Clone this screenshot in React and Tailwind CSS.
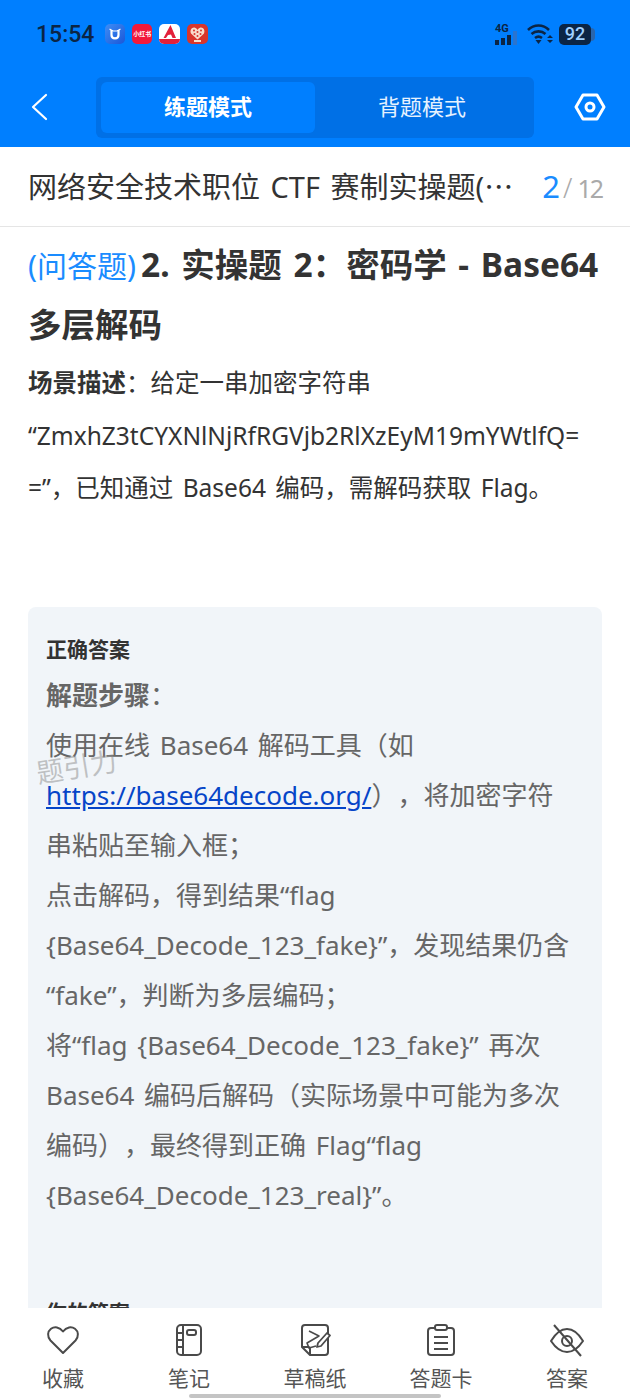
import React from "react";

const tabs = [
  { label: "收藏", icon: "heart" },
  { label: "笔记", icon: "note" },
  { label: "草稿纸", icon: "draft" },
  { label: "答题卡", icon: "card" },
  { label: "答案", icon: "eye" },
];

const TabIcon = ({ name }) => {
  if (name === "heart")
    return (
      <svg width="36" height="36" viewBox="0 0 36 36" fill="none" stroke="#4a4a4a" strokeWidth="2" strokeLinejoin="round">
        <path d="M18 31 L5.5 18.5 C2 14.5 2.5 9.5 6 6.8 C9.5 4.2 14.5 4.8 18 9.5 C21.5 4.8 26.5 4.2 30 6.8 C33.500 9.500 34 14.500 30.500 18.500 Z" />
      </svg>
    );
  if (name === "note")
    return (
      <svg width="36" height="36" viewBox="0 0 36 36" fill="none" stroke="#4a4a4a" strokeWidth="2">
        <rect x="6" y="3" width="24" height="30" rx="4" />
        <path d="M12 3 V33 M6 11 H12 M6 18 H12 M6 25 H12" />
        <rect x="16" y="8" width="9" height="5" rx="2" />
      </svg>
    );
  if (name === "draft")
    return (
      <svg width="36" height="36" viewBox="0 0 36 36" fill="none" stroke="#4a4a4a" strokeWidth="2" strokeLinejoin="round">
        <path d="M8 3 H28 Q31 3 31 6 V30 Q31 33 28 33 H13 L5 25 V6 Q5 3 8 3 Z" />
        <path d="M5 25 H11 Q13 25 13 27 V33" />
        <path d="M12 9 L22 14 L10 21 L12 26 L19 24" strokeWidth="1.600" />
        <path d="M20 25 L21 21 L30 11 L33 13.500 L24 24 Z" fill="#fff" strokeWidth="1.800" />
      </svg>
    );
  if (name === "card")
    return (
      <svg width="36" height="36" viewBox="0 0 36 36" fill="none" stroke="#4a4a4a" strokeWidth="2">
        <path d="M12 6 H8 Q5 6 5 9 V30 Q5 33 8 33 H28 Q31 33 31 30 V9 Q31 6 28 6 H24" />
        <rect x="12" y="3" width="12" height="5" rx="2" />
        <path d="M11 15 H25 M11 21 H25 M11 27 H25" />
      </svg>
    );
  return (
    <svg width="36" height="36" viewBox="0 0 36 36" fill="none" stroke="#4a4a4a" strokeWidth="2" strokeLinejoin="round">
      <path d="M2 19 C8 9 13 7 18 7 C23 7 28 9 34 19 C28 28 23 30 18 30 C13 30 8 28 2 19 Z" />
      <circle cx="18" cy="19" r="5" />
      <path d="M5 3 L32 34" />
    </svg>
  );
};

const StatusBar = () => (
  <div className="h-[68px] pl-[36px] pr-[35px] flex items-center justify-between">
    <div className="flex items-center gap-[7px]">
      <span className="text-[23px] font-medium text-[#0b2545] font-['Roboto',sans-serif] leading-none mr-[4px]">15:54</span>
      <div className="w-5 h-5 rounded-[5px] bg-gradient-to-br from-[#3f8df5] to-[#1c56d8] flex items-center justify-center">
        <svg width="14" height="14" viewBox="0 0 14 14" fill="none" stroke="#fff" strokeWidth="2.200">
          <path d="M3.500 3 V8 C3.500 12.500 10.500 12.500 10.500 8 V3" />
          <path d="M1.500 2 L5 4 H9 L12.500 2" strokeWidth="1.200" />
        </svg>
      </div>
      <div className="w-5 h-5 rounded-[5px] bg-[#f2193b] flex items-center justify-center">
        <span className="text-[6px] text-white font-bold leading-none whitespace-nowrap">小红书</span>
      </div>
      <div className="w-[21px] h-5 rounded-[5px] bg-white flex flex-col items-center overflow-hidden">
        <svg width="16" height="15" viewBox="0 0 16 15" fill="#e3203a">
          <path d="M8.500 1 L14 14 H10.500 L9 10.500 L6 11 L4 14 H1.500 Z" />
        </svg>
        <div className="w-full h-[5px] bg-[#e3203a]" />
      </div>
      <div className="w-[21px] h-5 rounded-[5px] bg-[#d9352b] flex items-center justify-center">
        <svg width="17" height="17" viewBox="0 0 17 17">
          <path d="M8.500 13.500 L2 7.500 C0.500 4 3 1 5.500 1.500 C7 2 8 3 8.500 4 C9 3 10 2 11.500 1.500 C14 1 16.500 4 15 7.500 Z" fill="#f8dccb" />
          <g fill="#d9352b">
            <circle cx="5" cy="4.500" r="1" /><circle cx="8.500" cy="6" r="1" /><circle cx="12" cy="4.500" r="1" />
            <circle cx="5.500" cy="8" r="1" /><circle cx="11.500" cy="8" r="1" /><circle cx="8.500" cy="10" r="1" />
          </g>
          <rect x="5" y="14" width="7" height="2" fill="#f8dccb" />
        </svg>
      </div>
    </div>
    <div className="flex items-center">
      <div className="relative w-[25px] h-[21px] mr-[7px]">
        <span className="absolute left-0 top-[-1px] text-[11px] font-bold text-[#0b2545] leading-none font-['Roboto',sans-serif]">4G</span>
        <div className="absolute left-0 bottom-0 flex items-end gap-[2px]">
          <div className="w-[4px] h-[5px] bg-[#0b2545]" />
          <div className="w-[4px] h-[7px] bg-[#0b2545]" />
          <div className="w-[4px] h-[10px] bg-[#0b2545]" />
          <div className="w-[4px] h-[14px] bg-[#2a74cf]" />
        </div>
      </div>
      <svg width="26" height="22" viewBox="0 0 26 22" fill="none" stroke="#0b2545" strokeWidth="2.600" className="mr-[6px]">
        <path d="M1 7 C7 1 16 1 22 7" />
        <path d="M4.500 11 C8.500 7.500 14.500 7.500 18.500 11" />
        <path d="M8 15 C10 13.500 13 13.500 15 15" />
        <path d="M8.500 17 H14.500 L11.500 21 Z" fill="#0b2545" stroke="none" />
        <path d="M20 15 H26 L23 12 Z M20 17 H26 L23 20 Z" fill="#0b2545" stroke="none" />
      </svg>
      <div className="flex items-center">
        <div className="w-[32px] h-[21px] rounded-[5px] bg-[#0b2545] flex items-center justify-center">
          <span className="text-[18px] font-medium text-[#9fd0ff] leading-none font-['Roboto',sans-serif]">92</span>
        </div>
        <div className="w-[4px] h-[13px] rounded-r-sm bg-[#2a66ad]" />
      </div>
    </div>
  </div>
);

const Header = () => (
  <header className="bg-[#007fff] h-[147px]">
    <StatusBar />
    <div className="flex items-center h-[62px] mt-[8px]">
      <div className="w-[96px] pl-[31px]">
        <svg width="17" height="28" viewBox="0 0 17 28" fill="none" stroke="#fff" strokeWidth="2.200" strokeLinecap="round" strokeLinejoin="round">
          <path d="M15 2 L2 14 L15 26" />
        </svg>
      </div>
      <div className="w-[438px] h-[61px] rounded-[6px] bg-[#0070e6] p-[5px] flex">
        <div className="w-[214px] pb-[2px] rounded-[6px] bg-[#007fff] flex items-center justify-center text-white text-[22px] font-bold">练题模式</div>
        <div className="flex-1 pb-[2px] flex items-center justify-center text-[#e6f2ff] text-[22px]">背题模式</div>
      </div>
      <div className="flex-1 flex justify-center pl-[16px]">
        <svg width="32" height="28" viewBox="0 0 32 28" fill="none" stroke="#fff" strokeWidth="3" strokeLinejoin="round">
          <path d="M9 2 H23 L30 14 L23 26 H9 L2 14 Z" />
          <circle cx="16" cy="14" r="4" />
        </svg>
      </div>
    </div>
  </header>
);

export default function App() {
  return (
    <div className="relative w-[630px] h-[1400px] overflow-hidden flex flex-col bg-white [text-spacing-trim:space-all] font-['Noto_Sans','Noto_Sans_CJK_SC',sans-serif]">
      <Header />

      <div className="h-[80px] shrink-0 border-b border-[#e5e5e5] pl-[28px] pr-[28px] flex items-center justify-between">
        <span className="text-[29px] text-[#333] whitespace-nowrap [word-spacing:3px]">
          网络安全技术职位 CTF 赛制实操题(<span className="font-['Noto_Sans_CJK_SC',sans-serif]">…</span>
        </span>
        <span className="flex items-baseline whitespace-nowrap">
          <span className="text-[31px] text-[#1a8cff]">2</span>
          <span className="text-[27px] text-[#aaa] font-light ml-[3px]">/</span>
          <span className="text-[25px] text-[#aaa] ml-[5px] tracking-[-2px]">12</span>
        </span>
      </div>

      <main className="relative flex-1 min-h-0 overflow-hidden px-[28px] pt-[8px]">
        <h1 className="text-[33.5px] leading-[58px] font-bold text-[#333] [word-spacing:3px]">
          <span className="text-[#1a8cff] font-normal text-[30px] mr-[5px]">(问答题)</span>2. 实操题 2：密码学 - Base64 多层解码
        </h1>
        <div className="text-[24.5px] leading-[52.5px] text-[#333] break-all mt-[4px] [word-spacing:3px]">
          <p><strong>场景描述</strong>：给定一串加密字符串</p>
          <p>“ZmxhZ3tCYXNlNjRfRGVjb2RlXzEyM19mYWtlfQ==”，已知通过 Base64 编码，需解码获取 Flag。</p>
        </div>

        <section className="mt-[92px] rounded-[8px] bg-[#f1f5f9] pl-[18px] pr-[26px] pt-[22px] pb-[60px]">
          <h2 className="text-[21px] leading-[40px] font-bold text-[#333]">正确答案</h2>
          <div className="text-[26px] leading-[50px] text-[#666] mt-[1px] [word-spacing:3px]">
            <p><strong>解题步骤</strong>：</p>
            <p>
              使用在线 Base64 解码工具（如 <a className="text-[#0645c8] underline" href="#">https://base64decode.org/</a>），将加密字符串粘贴至输入框；
            </p>
            <p>点击解码，得到结果“flag {"{"}Base64_Decode_123_fake{"}"}”，发现结果仍含 “fake”，判断为多层编码；</p>
            <p>将“flag {"{"}Base64_Decode_123_fake{"}"}” 再次 Base64 编码后解码（实际场景中可能为多次编码），最终得到正确 Flag“flag {"{"}Base64_Decode_123_real{"}"}”。</p>
          </div>
          <h2 className="text-[21px] leading-[40px] font-bold text-[#333] mt-[72px]">你的答案</h2>
        </section>

        <div className="absolute left-[36px] top-[526px] -rotate-[9deg] text-[27px] text-[#8c8c8c]/50 leading-none pointer-events-none">题引力</div>
      </main>

      <nav className="h-[92px] shrink-0 bg-white grid grid-cols-5 pt-[14px]">
        {tabs.map((tab) => (
          <div key={tab.label} className="flex flex-col items-center text-[21px] leading-[30px] text-[#555]">
            <TabIcon name={tab.icon} />
            <span className="mt-[5px]">{tab.label}</span>
          </div>
        ))}
      </nav>

      <div className="absolute left-[189px] bottom-[2px] w-[252px] h-[4px] rounded-full bg-[#c4c4c4]" />
    </div>
  );
}
